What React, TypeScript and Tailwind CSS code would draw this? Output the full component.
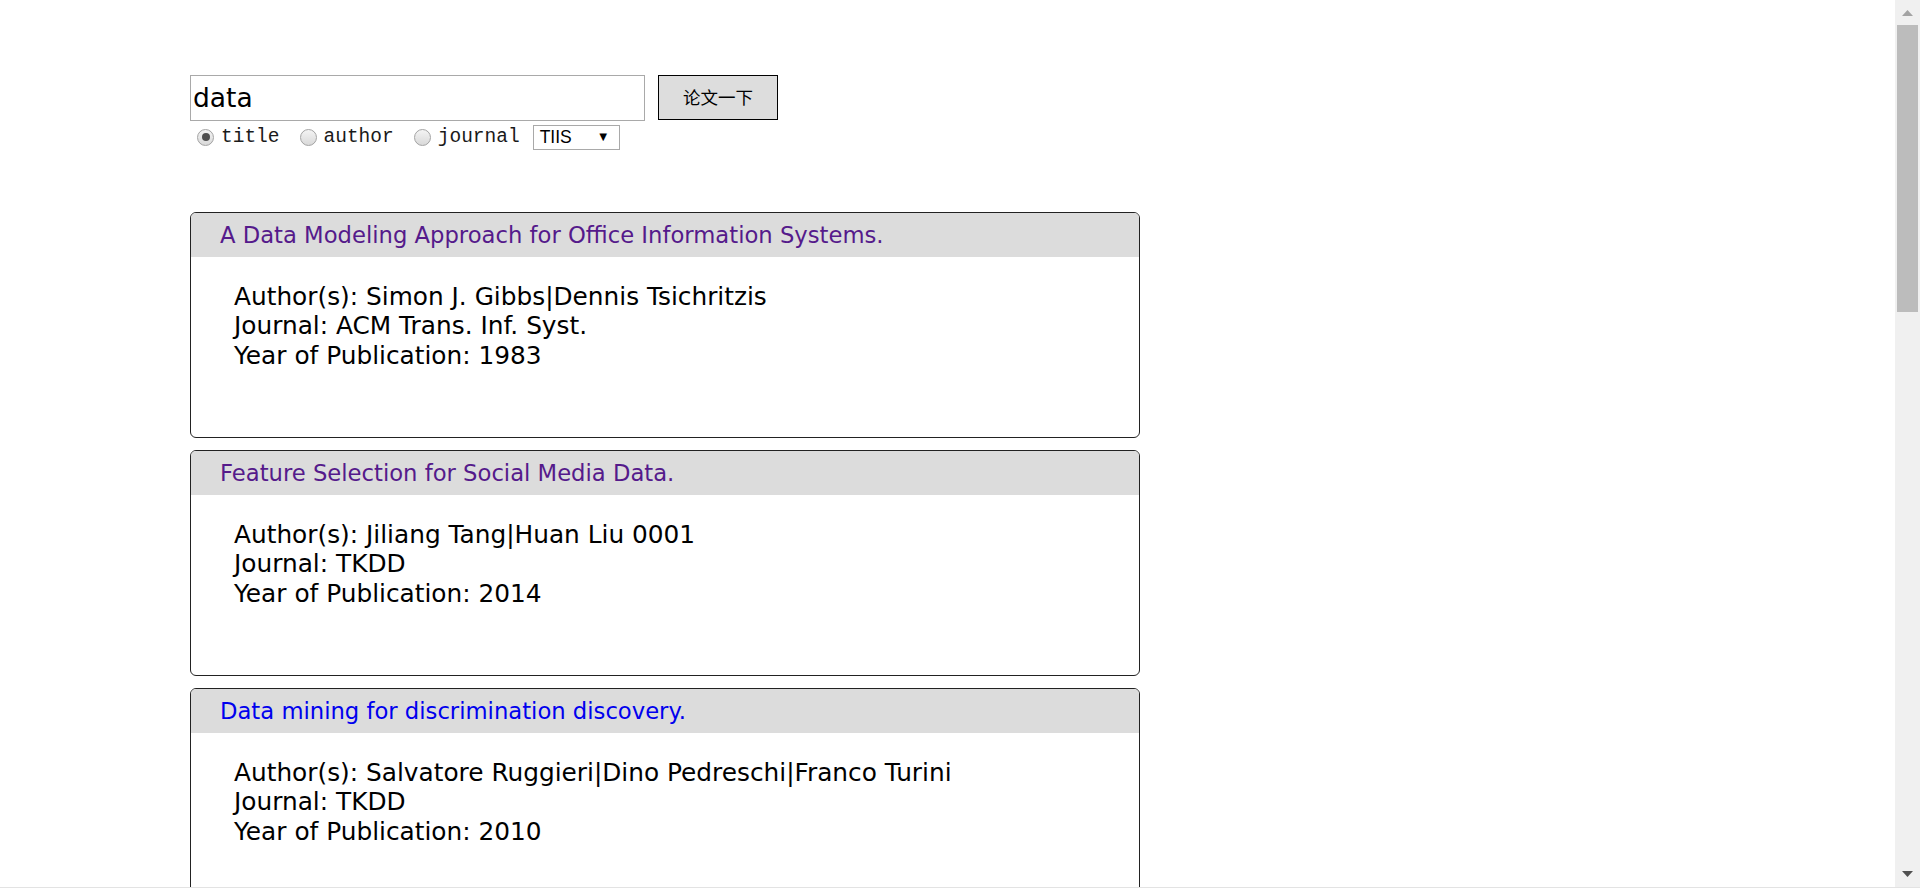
import React from 'react';

// Search results page: query box, field radios and a list of paper cards
const PAPERS = [
  {
    title: 'A Data Modeling Approach for Office Information Systems.',
    authors: 'Simon J. Gibbs|Dennis Tsichritzis',
    journal: 'ACM Trans. Inf. Syst.',
    year: '1983',
    visited: true,
  },
  {
    title: 'Feature Selection for Social Media Data.',
    authors: 'Jiliang Tang|Huan Liu 0001',
    journal: 'TKDD',
    year: '2014',
    visited: true,
  },
  {
    title: 'Data mining for discrimination discovery.',
    authors: 'Salvatore Ruggieri|Dino Pedreschi|Franco Turini',
    journal: 'TKDD',
    year: '2010',
    visited: false,
  },
];

const sans = "font-['DejaVu_Sans',sans-serif]";

function Radio({ label, checked }: { label: string; checked?: boolean }) {
  return (
    <label className="flex items-center">
      <span className="flex h-[17px] w-[17px] items-center justify-center rounded-full border border-[#a3a3a3] bg-gradient-to-b from-[#f4f4f4] to-[#d9d9d9]">
        {checked && <span className="h-[8px] w-[8px] rounded-full bg-[#4f4f4f]" />}
      </span>
      <span className="ml-[7px] mt-[2px] font-['Liberation_Mono',monospace] text-[19.5px] leading-none text-[#1a1a1a]">
        {label}
      </span>
    </label>
  );
}

function PaperCard({ paper }: { paper: (typeof PAPERS)[number] }) {
  return (
    <div className="h-[226px] w-[950px] shrink-0 overflow-hidden rounded-[6px] border border-[#222]">
      <div
        className={`h-[44px] bg-[#dcdcdc] pl-[29px] text-[22.7px] leading-[44px] ${sans} ${
          paper.visited ? 'text-[#551a8b]' : 'text-[#0000ee]'
        }`}
      >
        {paper.title}
      </div>
      <div className={`pl-[43px] pt-[25px] text-[24.8px] leading-[29.3px] text-black ${sans}`}>
        <div>Author(s): {paper.authors}</div>
        <div>Journal: {paper.journal}</div>
        <div>Year of Publication: {paper.year}</div>
      </div>
    </div>
  );
}

function Scrollbar() {
  return (
    <div className="flex h-full w-[25px] shrink-0 flex-col bg-[#f0f0f0]">
      <div className="flex h-[25px] items-center justify-center">
        <svg width="11" height="6" viewBox="0 0 11 6">
          <path d="M5.5 0 L11 6 L0 6 Z" fill="#a3a3a3" />
        </svg>
      </div>
      <div className="mx-[2px] h-[287px] bg-[#bcbcbc]" />
      <div className="flex-1" />
      <div className="flex h-[26px] items-center justify-center">
        <svg width="11" height="6" viewBox="0 0 11 6">
          <path d="M0 0 L11 0 L5.5 6 Z" fill="#505050" />
        </svg>
      </div>
    </div>
  );
}

export default function App() {
  return (
    <div className="flex h-[888px] w-full flex-col overflow-hidden bg-white">
      <div className="flex min-h-0 flex-1">
        <div className="min-w-0 flex-1 overflow-hidden pl-[190px] pt-[75px]">
          {/* Search row */}
          <div className="flex items-start">
            <div
              className={`flex h-[46px] w-[455px] items-center border border-[#a9a9a9] pl-[2px] text-[26.5px] text-black ${sans}`}
            >
              data
            </div>
            <button className="ml-[13px] h-[45px] w-[120px] border border-black bg-[#dddddd] font-['Noto_Sans_CJK_SC',sans-serif] text-[17.5px] text-black">
              论文一下
            </button>
          </div>

          {/* Search field options */}
          <div className="mt-[2px] flex h-[28px] items-center pl-[7px]">
            <Radio label="title" checked />
            <div className="w-[20px]" />
            <Radio label="author" />
            <div className="w-[20px]" />
            <Radio label="journal" />
            <div className="w-[13px]" />
            <div className="flex h-[25px] w-[87px] items-center justify-between border border-[#a9a9a9] pl-[6px] pr-[9px] font-['Liberation_Sans',sans-serif] text-[17.5px] text-black">
              <span>TIIS</span>
              <span className="text-[13px]">▼</span>
            </div>
          </div>

          {/* Results */}
          <div className="mt-[61px] flex flex-col gap-[12px]">
            {PAPERS.map((p) => (
              <PaperCard key={p.title} paper={p} />
            ))}
          </div>
        </div>
        <Scrollbar />
      </div>
      <div className="h-px shrink-0 bg-[#e3e3e3]" />
    </div>
  );
}
